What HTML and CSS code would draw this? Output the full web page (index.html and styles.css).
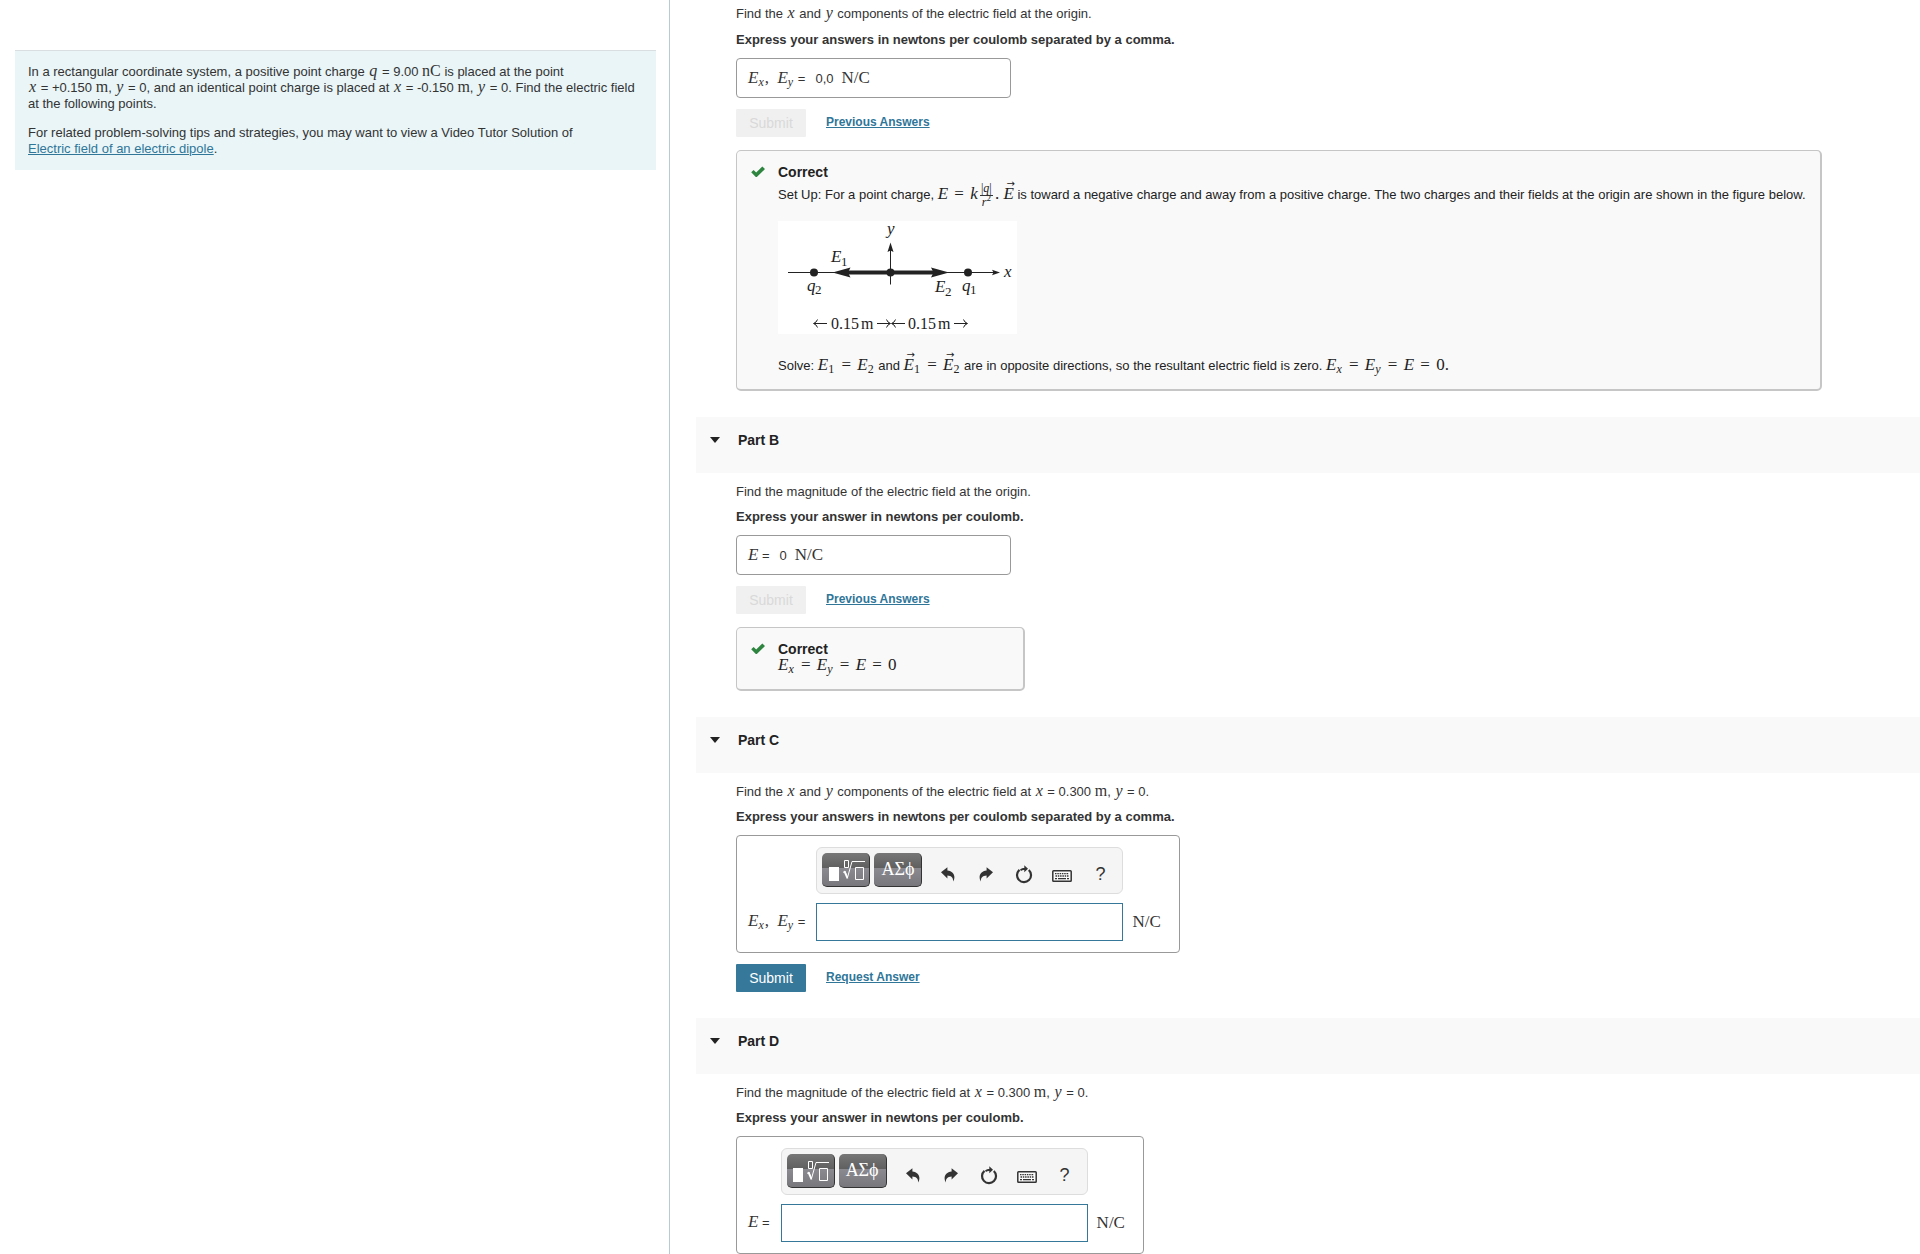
FILE: index.html
```html
<!DOCTYPE html>
<html lang="en">
<head>
<meta charset="utf-8">
<title>Electric field of two point charges</title>
<link rel="stylesheet" href="styles.css">
</head>
<body>
<svg class="sprite" aria-hidden="true">
  <symbol id="i-check" viewBox="0 0 14 12"><path d="M.2 6.200 2.600 4l2.600 2.400L11.300.6 14 3 5.800 11H4.800z" fill="#2e8540"/></symbol>
  <symbol id="i-undo" viewBox="0 0 14 15"><path d="M0 5.300 6.400.2v3.200c4.600.4 7 3.300 7 6.600 0 1.700-.5 3.300-1.300 4.600.3-3.600-1.600-5.900-5.700-6v3z" fill="#333"/></symbol>
  <symbol id="i-redo" viewBox="0 0 14 15"><path d="M14 5.300 7.600.2v3.200C3 3.800.6 6.700.6 10c0 1.700.5 3.300 1.300 4.600C1.600 11 3.500 8.700 7.600 8.600v3z" fill="#333"/></symbol>
  <symbol id="i-reset" viewBox="0 0 18 19"><path d="M4.500 4.800A7 7 0 1 0 13.800 5" fill="none" stroke="#333" stroke-width="2.200"/><path d="M5 4.600C6.500 3.200 8 3 9.300 3V.2L13 3.800 9.300 7.200V5.100C8 5 7 5.300 6 5.900z" fill="#333"/></symbol>
  <symbol id="i-keyboard" viewBox="0 0 20 12"><rect x=".8" y=".8" width="18.400" height="10.400" rx=".8" fill="#fafafa" stroke="#333" stroke-width="1.500"/><path d="M3 3.600h14M3.500 6h13" stroke="#333" stroke-width="1.400" stroke-dasharray="1.500 .8"/><path d="M3 8.600h2M6 8.600h8M15 8.600h2" stroke="#333" stroke-width="1.400"/></symbol>
  <symbol id="i-template" viewBox="0 0 38 24"><path d="M2 9h10v14H2z" fill="#fff"/><path d="M17.500 2.500h4v7h-4zM28.500 9.500h8v12h-8z" fill="none" stroke="#fff" stroke-width="1"/><path d="M16 14.500 18 13l2.500 6.500L25 3.500h13" fill="none" stroke="#fff" stroke-width="1"/><path d="m17.500 13.500 3 7" stroke="#fff" stroke-width="1.800"/></symbol>
</svg>
<div class="layout">
  <aside class="side">
    <div class="intro">
      <p>In a rectangular coordinate system, a positive point charge <span class="nb"><i class="m">q</i> = 9.00 <span class="m">nC</span></span> is placed at the point <span class="nb"><i class="m">x</i> = +0.150 <span class="m">m</span></span>, <span class="nb"><i class="m">y</i> = 0</span>, and an identical point charge is placed at <span class="nb"><i class="m">x</i> = -0.150 <span class="m">m</span></span>, <span class="nb"><i class="m">y</i> = 0</span>. Find the electric field at the following points.</p>
      <p>For related problem-solving tips and strategies, you may want to view a Video Tutor Solution of <a class="block" href="#">Electric field of an electric dipole</a>.</p>
    </div>
  </aside>
  <main class="main">
    <section class="part">
      <p>Find the <i class="m">x</i> and <i class="m">y</i> components of the electric field at the origin.</p>
      <p class="hint">Express your answers in newtons per coulomb separated by a comma.</p>
      <div class="answer"><span class="lhs"><span class="m"><i>E</i><sub><i>x</i></sub>,&nbsp; <i>E</i><sub><i>y</i></sub></span> =</span><span>0,0</span><span class="m">N/C</span></div>
      <div class="actions"><button class="submit" type="button" disabled>Submit</button><a href="#">Previous Answers</a></div>
      <div class="feedback wide">
        <svg class="check"><use href="#i-check"/></svg>
        <div>
          <h3>Correct</h3>
          <p class="setup">Set Up: For a point charge, <span class="m"><i>E</i> <span class="r">=</span> <i>k</i><span class="frac"><span>|<i>q</i>|</span><span><i>r</i><sup>2</sup></span></span>. <i class="vec">E</i></span> is toward a negative charge and away from a positive charge. The two charges and their fields at the origin are shown in the figure below.</p>
          <svg class="figure" viewBox="0 0 239 113" role="img" aria-label="Two charges on the x axis">
            <path class="axis" d="M10 51.500H216M112.500 28V63.500"/>
            <path d="M222 51.500 214 48.700 215.500 51.500 214 54.300zM112.500 21.500 109.500 31 112.500 29.500 115.500 31z"/>
            <path class="thick" d="M68 51.500H158"/>
            <path d="M54.500 51.500 72.500 46.500 70 51.500 72.500 56.500zM171 51.500 153 46.500 155.500 51.500 153 56.500z"/>
            <circle cx="36" cy="51.500" r="4"/><circle cx="112.500" cy="51.500" r="4"/><circle cx="190" cy="51.500" r="4"/>
            <g class="it"><text x="109" y="13">y</text><text x="226" y="56">x</text><text x="53" y="41">E</text><text x="157" y="71">E</text><text x="29" y="70">q</text><text x="184" y="70">q</text></g>
            <g class="sm"><text x="63" y="45">1</text><text x="167" y="75">2</text><text x="37" y="73">2</text><text x="192" y="73">1</text></g>
            <g class="up"><text x="53" y="108">0.15</text><text x="83" y="108">m</text><text x="130" y="108">0.15</text><text x="160" y="108">m</text></g>
            <path class="thin" d="M36 102.500H49M39.500 98.500Q38.500 101.500 35.500 102.500 38.500 103.500 39.500 106.500M99 102.500H112M108.500 98.500Q109.500 101.500 112.500 102.500 109.500 103.500 108.500 106.500M114 102.500H127M117.500 98.500Q116.500 101.500 113.500 102.500 116.500 103.500 117.500 106.500M176 102.500H189M185.500 98.500Q186.500 101.500 189.500 102.500 186.500 103.500 185.500 106.500"/>
          </svg>
          <p>Solve: <span class="m"><i>E</i><sub>1</sub> <span class="r">=</span> <i>E</i><sub>2</sub></span> and <span class="m"><i class="vec">E</i><sub>1</sub> <span class="r">=</span> <i class="vec">E</i><sub>2</sub></span> are in opposite directions, so the resultant electric field is zero. <span class="m"><i>E</i><sub><i>x</i></sub> <span class="r">=</span> <i>E</i><sub><i>y</i></sub> <span class="r">=</span> <i>E</i> <span class="r">=</span> 0.</span></p>
        </div>
      </div>
    </section>

    <h2><button class="toggle" type="button">Part B</button></h2>
    <section class="part">
      <p>Find the magnitude of the electric field at the origin.</p>
      <p class="hint">Express your answer in newtons per coulomb.</p>
      <div class="answer"><span class="lhs"><i class="m">E</i> =</span><span>0</span><span class="m">N/C</span></div>
      <div class="actions"><button class="submit" type="button" disabled>Submit</button><a href="#">Previous Answers</a></div>
      <div class="feedback">
        <svg class="check"><use href="#i-check"/></svg>
        <div>
          <h3>Correct</h3>
          <p><span class="m"><i>E</i><sub><i>x</i></sub> <span class="r">=</span> <i>E</i><sub><i>y</i></sub> <span class="r">=</span> <i>E</i> <span class="r">=</span> 0</span></p>
        </div>
      </div>
    </section>

    <h2><button class="toggle" type="button">Part C</button></h2>
    <section class="part">
      <p>Find the <i class="m">x</i> and <i class="m">y</i> components of the electric field at <i class="m">x</i> = 0.300 <span class="m">m</span>, <i class="m">y</i> = 0.</p>
      <p class="hint">Express your answers in newtons per coulomb separated by a comma.</p>
      <div class="editor">
        <div class="toolbar">
          <button class="key" type="button" aria-label="Templates"><svg width="38" height="24"><use href="#i-template"/></svg></button>
          <button class="key greek" type="button">ΑΣϕ</button>
          <button class="tool first" type="button" aria-label="Undo"><svg width="14" height="15"><use href="#i-undo"/></svg></button>
          <button class="tool" type="button" aria-label="Redo"><svg width="14" height="15"><use href="#i-redo"/></svg></button>
          <button class="tool" type="button" aria-label="Reset"><svg width="18" height="19"><use href="#i-reset"/></svg></button>
          <button class="tool" type="button" aria-label="Keyboard shortcuts"><svg class="kb" width="20" height="12"><use href="#i-keyboard"/></svg></button>
          <button class="tool" type="button">?</button>
        </div>
        <label for="ans-c"><span class="m"><i>E</i><sub><i>x</i></sub>,&nbsp; <i>E</i><sub><i>y</i></sub></span> =</label>
        <input id="ans-c" type="text">
        <span class="m unit">N/C</span>
      </div>
      <div class="actions"><button class="submit" type="button">Submit</button><a href="#">Request Answer</a></div>
    </section>

    <h2><button class="toggle" type="button">Part D</button></h2>
    <section class="part">
      <p>Find the magnitude of the electric field at <i class="m">x</i> = 0.300 <span class="m">m</span>, <i class="m">y</i> = 0.</p>
      <p class="hint">Express your answer in newtons per coulomb.</p>
      <div class="editor">
        <div class="toolbar">
          <button class="key" type="button" aria-label="Templates"><svg width="38" height="24"><use href="#i-template"/></svg></button>
          <button class="key greek" type="button">ΑΣϕ</button>
          <button class="tool first" type="button" aria-label="Undo"><svg width="14" height="15"><use href="#i-undo"/></svg></button>
          <button class="tool" type="button" aria-label="Redo"><svg width="14" height="15"><use href="#i-redo"/></svg></button>
          <button class="tool" type="button" aria-label="Reset"><svg width="18" height="19"><use href="#i-reset"/></svg></button>
          <button class="tool" type="button" aria-label="Keyboard shortcuts"><svg class="kb" width="20" height="12"><use href="#i-keyboard"/></svg></button>
          <button class="tool" type="button">?</button>
        </div>
        <label for="ans-d"><i class="m">E</i> =</label>
        <input id="ans-d" type="text">
        <span class="m unit">N/C</span>
      </div>
    </section>
  </main>
</div>
</body>
</html>
```
FILE: styles.css
```css
* { box-sizing: border-box; }
html { height: 100%; }
body {
  height: 100%;
  margin: 0;
  overflow: hidden;
  background: #fff;
  color: #333;
  font: 13px/16px "Liberation Sans", Arial, sans-serif;
}
p, h2, h3 { margin: 0; }
a { color: #2f7699; }
button { font-family: inherit; border: 0; padding: 0; }
.sprite { display: none; }

.layout {
  display: grid;
  grid-template-columns: calc(35% - 2px) minmax(0, 1fr);
  height: 100%;
}
.side {
  padding: 50px 13px 0 15px;
  border-right: 1px solid #b5cbd6;
}
.intro {
  padding: 13px 20px 13px 13px;
  border-top: 1px solid #d9dfe0;
  background: #e9f5f7;
}
.intro p + p { margin-top: 13px; }
.nb { white-space: nowrap; }
.block { display: inline-block; }

.main {
  min-width: 0;
  padding: 6px 0 0 26px;
  overflow: hidden;
}
.part { padding: 0 40px 26px; }
h2 + .part { padding-top: 11px; }
.hint { margin-top: 9px; font-weight: bold; }
.part:first-child > .hint { margin-top: 10px; }
h2 {
  height: 56px;
  padding: 15px 14px 0;
  background: #f9f9f9;
}
.toggle {
  display: flex;
  align-items: center;
  gap: 18px;
  background: none;
  color: #222;
  font-size: 14px;
  line-height: 16px;
  font-weight: bold;
}
.toggle::before {
  content: "";
  border: 5px solid transparent;
  border-top: 6px solid #222;
  border-bottom: 0;
}

/* Math set in the running text; it never changes the height of a line */
.m {
  font-family: "Liberation Serif", "Times New Roman", serif;
  font-size: 17px;
  line-height: 0;
}
p > .m, .nb > .m { font-size: 16px; }
p > i.m, .nb > i.m { margin: 0 1px; }
.feedback p > .m { font-size: 17px; }
.m sub, .m sup { font-size: 12px; line-height: 0; }
.m sub { margin-right: 1px; vertical-align: -3px; }
.r { margin: 0 2px; }
.vec { position: relative; }
.vec::before {
  content: "→";
  position: absolute;
  left: 3px;
  top: -5px;
  font: normal 10px/10px "DejaVu Sans", sans-serif;
}
.frac {
  display: inline-flex;
  flex-direction: column;
  align-items: center;
  margin: 0 2px;
  vertical-align: middle;
  font-size: 12px;
  line-height: 13px;
}
.frac span + span { border-top: 1px solid #333; padding: 0 2px; }
.frac .m sup, .frac sup { font-size: 9px; }

.answer {
  display: flex;
  align-items: baseline;
  gap: 8px;
  width: 275px;
  height: 40px;
  margin-top: 10px;
  padding: 12px 11px 0;
  border: 1px solid #999;
  border-radius: 4px;
}
.lhs, .editor label { padding-right: 2px; }
.actions {
  display: flex;
  gap: 20px;
  margin-top: 11px;
}
.actions a { margin-top: 5px; font-size: 12px; font-weight: bold; }
.submit {
  width: 70px;
  height: 28px;
  border-radius: 1px;
  background: #36789a;
  color: #fff;
  font-size: 14px;
}
.submit:disabled { background: #f0f0f0; color: #d9d9d9; }

.feedback {
  display: flex;
  gap: 13px;
  width: 289px;
  margin-top: 13px;
  padding: 13px 14px 15px;
  border: 1px solid #c6c6c6;
  border-right-width: 2px;
  border-bottom-width: 2px;
  border-radius: 5px;
  background: #f9f9f9;
  color: #222;
}
.feedback.wide { width: fit-content; }
.check { flex: none; width: 14px; height: 12px; margin-top: 2px; }
h3 { font-size: 14px; line-height: 16px; }
h3 + p { margin-top: 1px; }
h3 + .setup { margin-top: 0; line-height: 30px; white-space: nowrap; }
.figure {
  display: block;
  width: 239px;
  height: 113px;
  margin: 11px 0 24px;
  overflow: visible;
  background: #fff;
  fill: #222;
  font-family: "Liberation Serif", serif;
}
.axis { stroke: #222; stroke-width: 1; }
.thick { stroke: #222; stroke-width: 4; }
.thin { fill: none; stroke: #222; stroke-width: 1; }
.it { font-size: 17px; font-style: italic; }
.sm { font-size: 13px; }
.up { font-size: 16px; }

.editor {
  display: grid;
  grid-template-columns: auto 307px auto;
  gap: 9px;
  align-items: center;
  width: fit-content;
  margin-top: 10px;
  padding: 11px 18px 11px 11px;
  border: 1px solid #999;
  border-radius: 4px;
}
.toolbar {
  grid-column: 2;
  display: flex;
  gap: 4px;
  height: 47px;
  padding: 5px;
  border: 1px solid #ddd;
  border-radius: 6px;
  background: #f5f5f5;
}
.editor label { grid-column: 1; }
.editor input {
  height: 38px;
  border: 1px solid #36789a;
  padding: 0 8px;
  font: inherit;
}
.key {
  display: grid;
  place-items: center;
  width: 48px;
  height: 34px;
  border-radius: 5px;
  border-right: 1px solid #333;
  border-bottom: 1px solid #333;
  background: linear-gradient(#777, #606060 44%, #8a8a90 45%, #77777c);
  color: #fff;
}
.greek { padding-bottom: 1px; font: 18px/20px "Liberation Serif", serif; }
.tool {
  display: grid;
  place-items: center;
  width: 38px;
  height: 34px;
  margin-right: -4px;
  padding-top: 8px;
  background: none;
  color: #333;
  font-size: 18px;
}
.tool.first { margin-left: 3px; }
.kb { margin-top: 4px; }
```
